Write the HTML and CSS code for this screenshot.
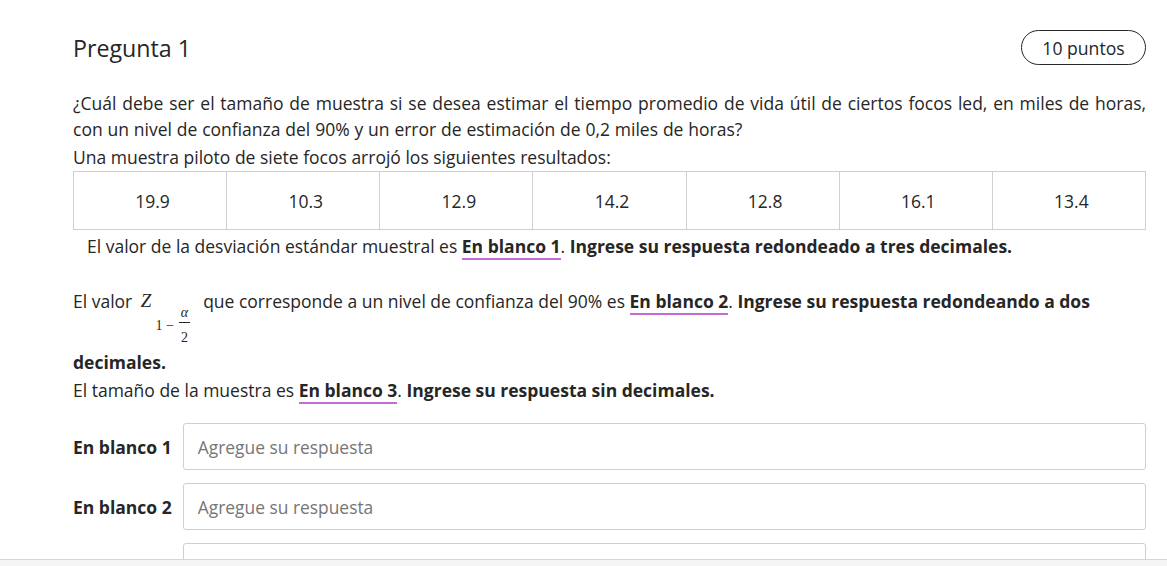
FILE: index.html
```html
<!DOCTYPE html>
<html lang="es">
<head>
<meta charset="utf-8">
<title>Pregunta 1</title>
<link rel="stylesheet" href="styles.css">
</head>
<body>
<main class="question">
  <header class="q-header">
    <h1 class="q-title">Pregunta 1</h1>
    <span class="q-points">10 puntos</span>
  </header>

  <p class="q-text">¿Cuál debe ser el tamaño de muestra si se desea estimar el tiempo promedio de vida útil de ciertos focos led, en miles de horas, con un nivel de confianza del 90% y un error de estimación de 0,2 miles de horas?</p>
  <p class="q-line">Una muestra piloto de siete focos arrojó los siguientes resultados:</p>

  <table class="data">
    <tr>
      <td>19.9</td><td>10.3</td><td>12.9</td><td>14.2</td><td>12.8</td><td>16.1</td><td>13.4</td>
    </tr>
  </table>

  <p class="q-indent">El valor de la desviación estándar muestral es <span class="blank">En blanco 1</span>. <b>Ingrese su respuesta redondeado a tres decimales.</b></p>

  <p class="q-math">El valor <span class="math"><span class="m-z">Z</span><span class="m-sub"><span class="m-one">1 −</span><span class="m-frac"><span class="m-num">α</span><span class="m-den">2</span></span></span></span>que corresponde a un nivel de confianza del 90% es <span class="blank">En blanco 2</span>. <b>Ingrese su respuesta redondeando a dos decimales.</b></p>
  <p class="q-line">El tamaño de la muestra es <span class="blank">En blanco 3</span>. <b>Ingrese su respuesta sin decimales.</b></p>

  <form class="answers">
    <label class="a-label" for="b1">En blanco 1</label>
    <input class="a-input" id="b1" type="text" placeholder="Agregue su respuesta">
    <label class="a-label" for="b2">En blanco 2</label>
    <input class="a-input" id="b2" type="text" placeholder="Agregue su respuesta">
    <label class="a-label" for="b3">En blanco 3</label>
    <input class="a-input" id="b3" type="text" placeholder="Agregue su respuesta">
  </form>
</main>
<div class="footer-bar"></div>
</body>
</html>
```

FILE: styles.css
```css
html, body {
  margin: 0;
  padding: 0;
  background: #ffffff;
}

body {
  font-family: "Open Sans", "Noto Sans", sans-serif;
  font-size: 17.5px;
  line-height: 26px;
  color: #262626;
  overflow: hidden;
}

.question {
  padding: 30px 21px 0 73px;
}

.q-header {
  display: flex;
  justify-content: space-between;
  align-items: center;
  height: 35px;
}

.q-title {
  margin: 0;
  font-size: 23.2px;
  font-weight: 400;
  line-height: 30px;
  color: #262626;
}

.q-points {
  box-sizing: border-box;
  height: 35px;
  width: 125px;
  display: flex;
  align-items: center;
  justify-content: center;
  border: 1px solid #262626;
  border-radius: 18px;
  font-size: 17.6px;
  color: #262626;
}

.q-text {
  margin: 25px 0 0 0;
  text-align: justify;
  word-spacing: 0.3px;
}

.q-line {
  margin: 2px 0 0 0;
}

.data {
  width: 100%;
  table-layout: fixed;
  border-collapse: collapse;
  margin-top: 1px;
}

.data td {
  border: 1px solid #cfcfcf;
  height: 57px;
  padding: 0 0 0 5px;
  text-align: center;
  vertical-align: middle;
}

.q-indent {
  margin: 3px 0 0 0;
  padding-left: 14px;
}

.blank {
  font-weight: 700;
  border-bottom: 2px solid #c56bd6;
}

b {
  font-weight: 700;
}

.q-math {
  margin: 29px 0 0 0;
  line-height: 26px;
}

.math {
  display: inline-flex;
  align-items: flex-start;
  vertical-align: top;
  font-family: "Liberation Serif", "DejaVu Serif", serif;
  margin-left: 4px;
  margin-right: 13px;
  height: 61px;
}

.m-z {
  font-style: italic;
  font-size: 19px;
  line-height: 26px;
}

.m-sub {
  display: inline-flex;
  align-items: center;
  margin-top: 18px;
  margin-left: 4px;
  font-size: 14px;
  line-height: 16px;
}

.m-one {
  margin-right: 5px;
}

.m-frac {
  display: inline-flex;
  flex-direction: column;
  align-items: center;
}

.m-num {
  font-style: italic;
  padding: 0 2px 2px;
  border-bottom: 1px solid #262626;
  line-height: 14px;
}

.m-den {
  padding-top: 8px;
  line-height: 14px;
}

.answers {
  display: grid;
  grid-template-columns: auto 1fr;
  column-gap: 11px;
  row-gap: 13px;
  align-items: center;
  margin-top: 20px;
}

.a-label {
  font-weight: 700;
}

.a-input {
  box-sizing: border-box;
  height: 47px;
  width: 100%;
  margin: 0;
  border: 1px solid #cfcfcf;
  border-radius: 3px;
  padding: 0 14px;
  font-family: "Open Sans", "Noto Sans", sans-serif;
  font-size: 17.4px;
  color: #262626;
  background: #ffffff;
}

.a-input::placeholder {
  color: #767676;
}

.footer-bar {
  position: fixed;
  left: 0;
  right: 0;
  bottom: 0;
  height: 6px;
  background: #f5f5f5;
  border-top: 1px solid #d6d6d6;
}
```
